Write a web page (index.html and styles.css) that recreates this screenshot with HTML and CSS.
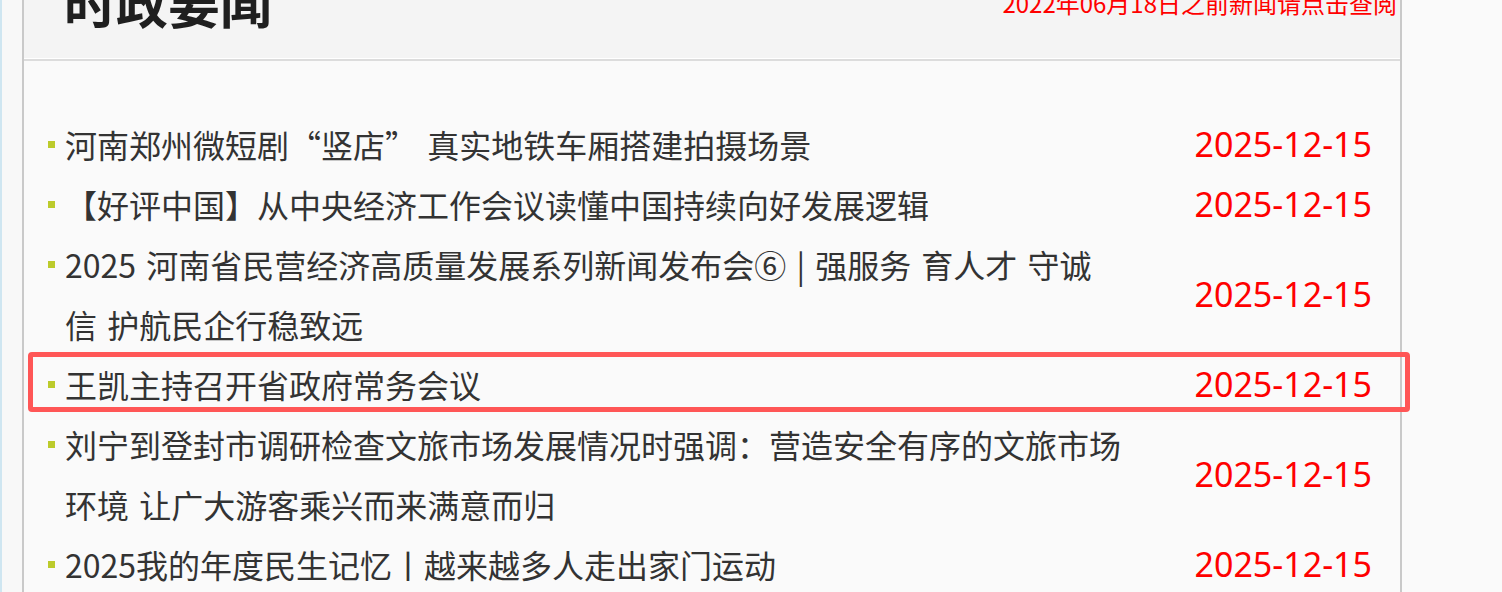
FILE: index.html
```html
<!DOCTYPE html>
<html lang="zh-CN">
<head>
<meta charset="utf-8">
<title>时政要闻</title>
<link rel="stylesheet" href="styles.css">
</head>
<body>
<div class="page">
  <div class="side"></div>
  <section class="panel">
    <header class="panel-head">
      <h2 class="panel-title">时政要闻</h2>
      <a class="archive-link" href="#">2022年06月18日之前新闻请点击查阅</a>
    </header>
    <ul class="news-list">
      <li class="news-item">
        <a class="news-title" href="#">河南郑州微短剧“竖店” 真实地铁车厢搭建拍摄场景</a>
        <span class="news-date">2025-12-15</span>
      </li>
      <li class="news-item">
        <a class="news-title" href="#">【好评中国】从中央经济工作会议读懂中国持续向好发展逻辑</a>
        <span class="news-date">2025-12-15</span>
      </li>
      <li class="news-item">
        <a class="news-title" href="#">2025 河南省民营经济高质量发展系列新闻发布会⑥ | 强服务 育人才 守诚信 护航民企行稳致远</a>
        <span class="news-date">2025-12-15</span>
      </li>
      <li class="news-item highlighted">
        <a class="news-title" href="#">王凯主持召开省政府常务会议</a>
        <span class="news-date">2025-12-15</span>
      </li>
      <li class="news-item">
        <a class="news-title" href="#">刘宁到登封市调研检查文旅市场发展情况时强调：营造安全有序的文旅市场环境 让广大游客乘兴而来满意而归</a>
        <span class="news-date">2025-12-15</span>
      </li>
      <li class="news-item">
        <a class="news-title" href="#">2025我的年度民生记忆丨越来越多人走出家门运动</a>
        <span class="news-date">2025-12-15</span>
      </li>
    </ul>
  </section>
</div>
</body>
</html>
```

FILE: styles.css
```css
html, body {
  margin: 0;
  padding: 0;
  background: #fafafa;
  height: 592px;
  overflow: hidden;
}

body {
  font-family: "Noto Sans CJK SC", "Noto Sans", sans-serif;
  color: #333;
}

.page {
  display: flex;
  align-items: flex-start;
  margin-top: -30px;
}

.side {
  width: 20px;
  flex: none;
  align-self: stretch;
  min-height: 700px;
  background: #f8f8f8;
  border-left: 2px solid #cfe6f1;
}

.panel {
  width: 1376px;
  flex: none;
  border-left: 2px solid #c9c9c9;
  border-right: 2px solid #c9c9c9;
  background: #fafafa;
  min-height: 700px;
}

.panel-head {
  height: 91px;
  box-sizing: border-box;
  background: #f4f4f4;
  border-bottom: 2px solid #dcdcdc;
  box-shadow: inset 0 -1px 0 #ffffff;
  display: flex;
  justify-content: space-between;
  align-items: flex-start;
  padding: 0 3px 0 40px;
}

.panel-title {
  margin: 6px 0 0;
  font-size: 52px;
  line-height: 52px;
  font-weight: 700;
  color: #1f1f1f;
}

.archive-link {
  margin-top: 21px;
  font-size: 24px;
  line-height: 24px;
  color: #ff0000;
  text-decoration: none;
}

.news-list {
  list-style: none;
  margin: 53px 0 0;
  padding: 0 28px 0 24px;
}

.news-item {
  display: flex;
  align-items: center;
}

.news-title {
  flex: none;
  width: 1074px;
  box-sizing: border-box;
  padding-left: 17px;
  font-size: 32px;
  line-height: 60px;
  word-spacing: 3px;
  color: #333;
  text-decoration: none;
  background: linear-gradient(#bccb2c, #bccb2c) no-repeat 0 27px / 7px 7px;
}

.news-date {
  margin-left: auto;
  font-family: "Noto Sans", "Noto Sans CJK SC", sans-serif;
  font-size: 34px;
  line-height: 60px;
  color: #ff0000;
}

.highlighted {
  position: relative;
}

.highlighted::after {
  content: "";
  position: absolute;
  left: -20px;
  right: -38px;
  top: -2px;
  bottom: 2px;
  border: 5px solid #ff5656;
  border-radius: 4px;
  pointer-events: none;
}
```
